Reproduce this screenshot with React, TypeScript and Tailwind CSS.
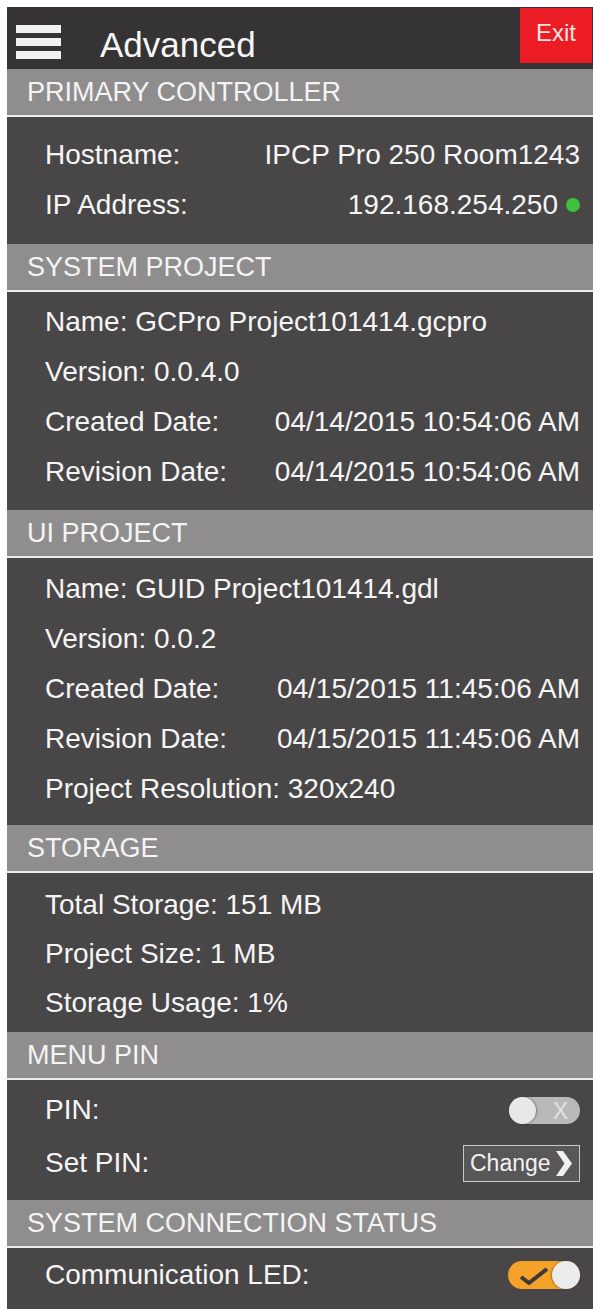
import { ReactNode } from 'react';

const font = { fontFamily: '"Liberation Sans", Arial, Helvetica, sans-serif' };

function Band({ title }: { title: string }) {
  return (
    <div className="h-[48px] bg-[#8f8d8e] border-b-2 border-[#ececec] flex items-center pl-[20px]">
      <span className="text-[27px] leading-none text-[#f4f4f4]">{title}</span>
    </div>
  );
}

function Row({
  label,
  value,
  h = 'h-[50px]',
}: {
  label: ReactNode;
  value?: ReactNode;
  h?: string;
}) {
  return (
    <div className={`${h} flex items-center justify-between pl-[38px] pr-[13px] text-[28px] leading-none text-[#f5f5f5]`}>
      <span>{label}</span>
      {value !== undefined && <span className="flex items-center">{value}</span>}
    </div>
  );
}

function PinToggle() {
  return (
    <div className="relative w-[71px] h-[27px] rounded-full bg-[#bab8b9]">
      <div className="absolute left-0 top-0 w-[27px] h-[27px] rounded-full bg-[#e8e8e8] shadow-[1px_0_2px_rgba(0,0,0,0.35)]" />
      <span className="absolute right-[12px] top-[3px] text-[23px] leading-none text-[#e2e2e2]">X</span>
    </div>
  );
}

function LedToggle() {
  return (
    <div className="relative w-[72px] h-[28px] rounded-full bg-[#f4a328]">
      <svg className="absolute left-[11px] top-[6px]" width="30" height="18" viewBox="0 0 30 18">
        <path d="M2 10 L10 16 L28 2" fill="none" stroke="#3a3838" strokeWidth="4" strokeLinejoin="round" />
      </svg>
      <div className="absolute right-0 top-0 w-[28px] h-[28px] rounded-full bg-[#ececec] shadow-[-1px_0_2px_rgba(0,0,0,0.3)]" />
    </div>
  );
}

function ChangeButton() {
  return (
    <div className="w-[117px] h-[37px] border border-[#c9c9c9] bg-[#585657] flex items-center pl-[6px] gap-[5px]">
      <span className="text-[23px] leading-none text-[#f2f2f2]">Change</span>
      <svg width="16" height="25" viewBox="0 0 16 25">
        <polygon points="0,0 7,0 16,12.5 7,25 0,25 8.5,12.5" fill="#f0f0f0" />
      </svg>
    </div>
  );
}

export default function App() {
  return (
    <div className="w-[593px] h-[1309px] bg-white pl-[7px] pt-[7px] overflow-hidden" style={font}>
      <div className="h-full bg-[#484647]">
        {/* title bar */}
        <div className="h-[62px] bg-[#353334] flex items-start">
          <div className="ml-[9px] mt-[18px] flex flex-col gap-[5px]">
            <div className="w-[45px] h-[8px] bg-[#f2f2f2]" />
            <div className="w-[45px] h-[8px] bg-[#f2f2f2]" />
            <div className="w-[45px] h-[8px] bg-[#f2f2f2]" />
          </div>
          <span className="ml-[39px] mt-[20px] text-[35px] leading-none text-[#f6f6f6]">Advanced</span>
          <div className="ml-auto mr-[1px] mt-[1px] w-[72px] h-[55px] bg-[#ec1c24] flex justify-center pt-[13px]">
            <span className="text-[24px] leading-none text-[#fbe3e3]">Exit</span>
          </div>
        </div>

        <Band title="PRIMARY CONTROLLER" />
        <div className="pt-[13px] pb-[14px]">
          <Row label="Hostname:" value="IPCP Pro 250 Room1243" />
          <Row
            label="IP Address:"
            value={
              <>
                192.168.254.250
                <span className="ml-[8px] w-[14px] h-[14px] rounded-full bg-[#3dc13c]" />
              </>
            }
          />
        </div>

        <Band title="SYSTEM PROJECT" />
        <div className="pt-[5px] pb-[13px]">
          <Row label="Name: GCPro Project101414.gcpro" />
          <Row label="Version: 0.0.4.0" />
          <Row label="Created Date:" value="04/14/2015 10:54:06 AM" />
          <Row label="Revision Date:" value="04/14/2015 10:54:06 AM" />
        </div>

        <Band title="UI PROJECT" />
        <div className="pt-[6px] pb-[11px]">
          <Row label="Name: GUID Project101414.gdl" />
          <Row label="Version: 0.0.2" />
          <Row label="Created Date:" value="04/15/2015 11:45:06 AM" />
          <Row label="Revision Date:" value="04/15/2015 11:45:06 AM" />
          <Row label="Project Resolution: 320x240" />
        </div>

        <Band title="STORAGE" />
        <div className="pt-[7px] pb-[5px]">
          <Row h="h-[49px]" label="Total Storage: 151 MB" />
          <Row h="h-[49px]" label="Project Size: 1 MB" />
          <Row h="h-[49px]" label="Storage Usage: 1%" />
        </div>

        <Band title="MENU PIN" />
        <div className="pt-[5px] pb-[9px]">
          <Row label="PIN:" value={<PinToggle />} />
          <Row h="h-[56px]" label="Set PIN:" value={<ChangeButton />} />
        </div>

        <Band title="SYSTEM CONNECTION STATUS" />
        <div className="pt-[2px]">
          <Row label="Communication LED:" value={<LedToggle />} />
        </div>
      </div>
    </div>
  );
}
